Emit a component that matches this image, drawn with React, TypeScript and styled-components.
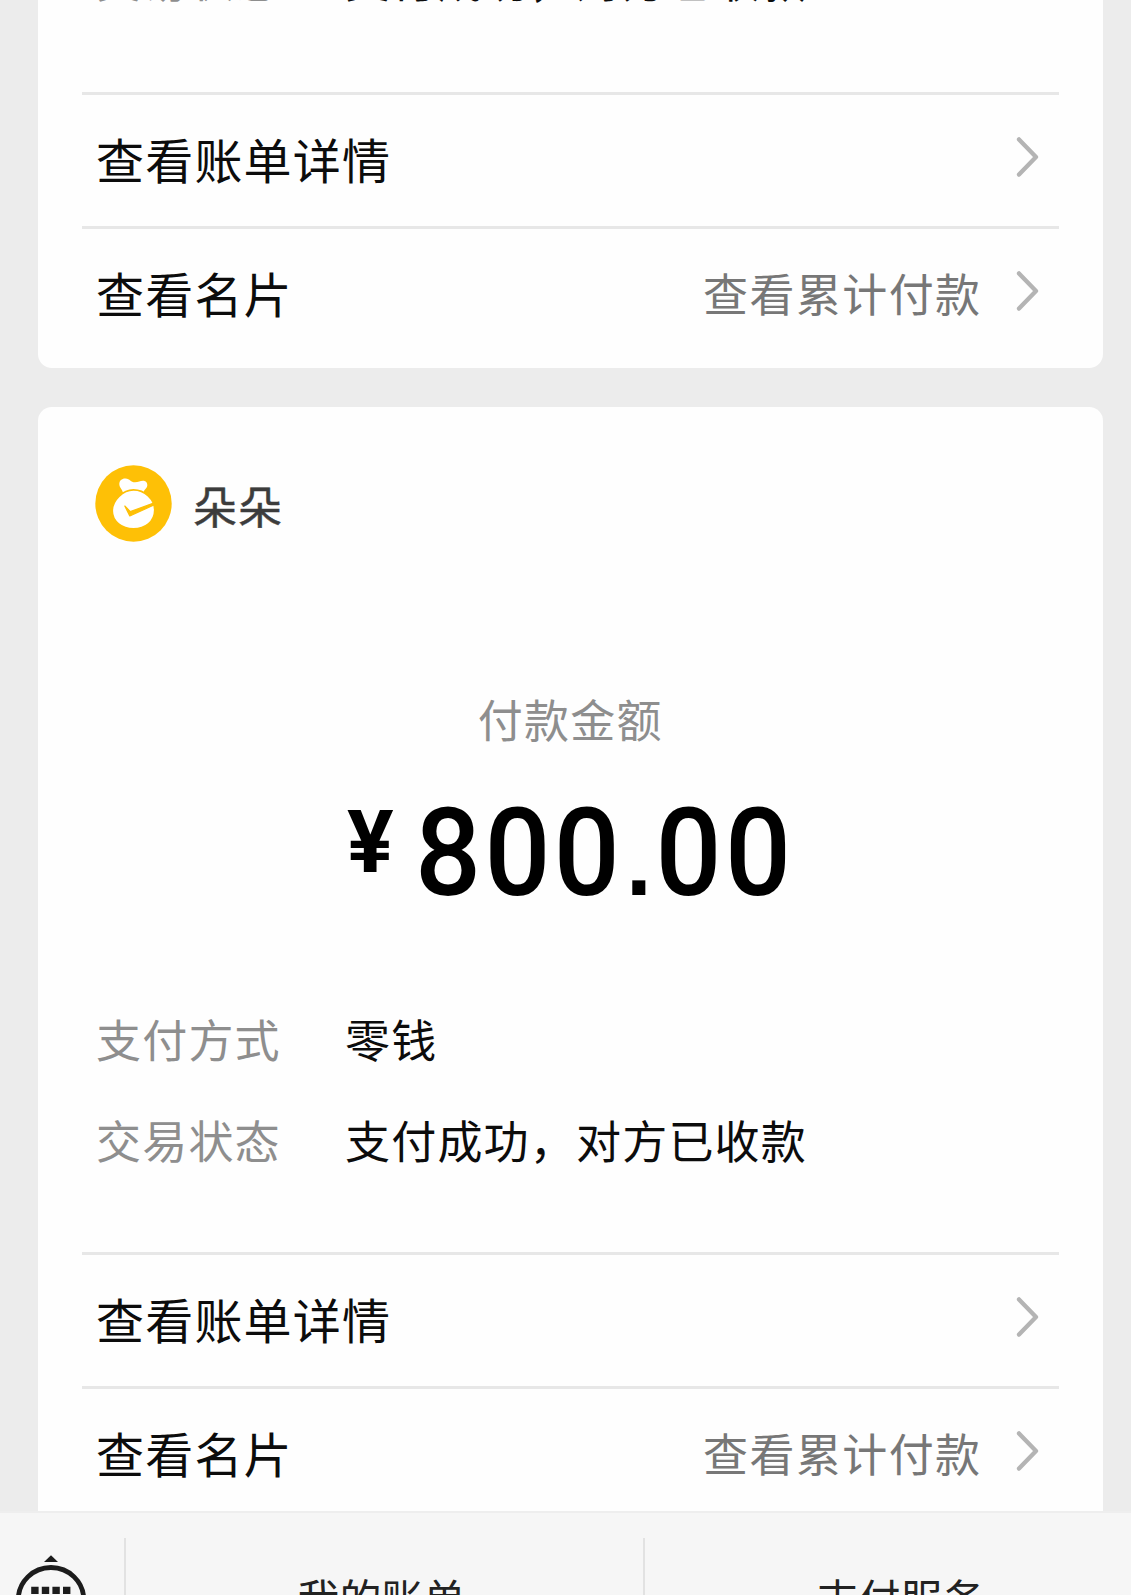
import styled, {createGlobalStyle} from "styled-components";

const GlobalStyle = createGlobalStyle`
    * {
        box-sizing: border-box;
    }

    body {
        margin: 0;
        background: #ececec;
        overflow: hidden;
        font-family: "Noto Sans CJK SC", sans-serif;
    }
`

type DetailItem = {
    label: string,
    value: string,
}

type PayInfo = {
    name: string,
    yuan: string,
    cents: string,
}

type PayCardProps = {
    info?: PayInfo,
    details: DetailItem[],
}

const STATUS: DetailItem = {label: "交易状态", value: "支付成功，对方已收款"}
const METHOD: DetailItem = {label: "支付方式", value: "零钱"}

const App = () => {
    return <StyledPage>
        <GlobalStyle/>
        <StyledFeed>
            <StyledFeedList>
                <PayCard details={[STATUS]}/>
                <PayCard info={{name: "朵朵", yuan: "800", cents: "00"}} details={[METHOD, STATUS]}/>
            </StyledFeedList>
        </StyledFeed>
        <StyledMenuBar>
            <StyledKeyboardButton>
                <KeyboardIcon/>
            </StyledKeyboardButton>
            <StyledMenuButton>我的账单</StyledMenuButton>
            <StyledMenuButton>支付服务</StyledMenuButton>
        </StyledMenuBar>
    </StyledPage>
}

const PayCard = ({info, details}: PayCardProps) => {
    return <StyledCard $cut={!info}>
        {info && <>
            <StyledHeader>
                <BagLogo/>
                <StyledName>{info.name}</StyledName>
            </StyledHeader>
            <StyledAmountLabel>付款金额</StyledAmountLabel>
            <StyledAmount>
                <StyledCurrency>¥</StyledCurrency>
                <StyledNumber>{info.yuan}<StyledPoint>.</StyledPoint>{info.cents}</StyledNumber>
            </StyledAmount>
        </>}
        <StyledDetails>
            {details.map(item =>
                <StyledDetailRow key={item.label}>
                    <StyledDetailLabel>{item.label}</StyledDetailLabel>
                    <StyledDetailValue>{item.value}</StyledDetailValue>
                </StyledDetailRow>
            )}
        </StyledDetails>
        <StyledLinkRow>
            <StyledLinkTitle>查看账单详情</StyledLinkTitle>
            <Chevron/>
        </StyledLinkRow>
        <StyledLinkRow>
            <StyledLinkTitle>查看名片</StyledLinkTitle>
            <StyledLinkExtra>查看累计付款</StyledLinkExtra>
            <Chevron/>
        </StyledLinkRow>
    </StyledCard>
}

const Chevron = () => (
    <StyledChevron viewBox="0 0 24 42">
        <path d="M3 3.4 L20 21 L3 38.6" fill="none" stroke="#b4b4b4" strokeWidth="4.3" strokeLinecap="round"
              strokeLinejoin="round"/>
    </StyledChevron>
)

const BagLogo = () => (
    <StyledLogo viewBox="0 0 77 77">
        <circle cx="38.5" cy="38.5" r="38.2" fill="#fec006"/>
        <path d="M28 28 C27.5 24 24.3 23 24.3 19 C24.3 15.5 27 13.2 30.5 13.4 C35 13.6 35.5 17.2 40 17.2 C43.5 17.2 45 15.8 48 15.8 C51 15.8 52.5 18 52.3 20.5 C52 23.5 49 24 48.5 28 Z"
              fill="#fff"/>
        <path d="M38.5 24.8 C49.5 24.8 59.8 34 59.8 45 C59.8 57 50 63.8 38.5 63.8 C27 63.8 17.2 56.5 17.2 46 C17.2 35 28 24.8 38.5 24.8 Z"
              fill="#fff" stroke="#fec006" strokeWidth="1.8"/>
        <path d="M29.8 41 L35.3 46.6 L60 37.6 L60 39.5 L34.8 51 Z" fill="#fec006"
              stroke="#fec006" strokeWidth="1.2" strokeLinejoin="round"/>
    </StyledLogo>
)

const KeyboardIcon = () => (
    <StyledKeyboard viewBox="0 0 74 84">
        <path d="M37 3.3 L44 10 H30 Z" fill="#1c1c1c"/>
        <ellipse cx="37" cy="47.5" rx="32.7" ry="32" fill="none" stroke="#1c1c1c" strokeWidth="4.8"/>
        <path d="M17.2 34.7h7.4v7.4h-7.4z M27.8 34.7h7.4v7.4h-7.4z M38.4 34.7h7.4v7.4h-7.4z M49 34.7h7.4v7.4h-7.4z"
              fill="#1c1c1c"/>
        <path d="M22.5 46h7.4v7.4h-7.4z M33 46h7.4v7.4h-7.4z M43.6 46h7.4v7.4h-7.4z M25 58h24v4h-24z" fill="#1c1c1c"/>
    </StyledKeyboard>
)

const StyledPage = styled.div`
    display: flex;
    flex-direction: column;
    width: 1131px;
    height: 1595px;
    overflow: hidden;
    background: #ececec;
`

const StyledFeed = styled.div`
    height: 1511px;
    flex-shrink: 0;
    overflow: hidden;
`

/* the list is scrolled, only the end of the first card is visible */
const StyledFeedList = styled.div`
    display: flex;
    flex-direction: column;
    gap: 39px;
    margin-top: -70px;
    padding: 0 28.5px 0 38px;
`

const StyledCard = styled.div<{ $cut: boolean }>`
    display: flex;
    flex-direction: column;
    padding: ${props => props.$cut ? "0" : "58px"} 44px 8px;
    border-radius: 14px;
    background: #fefefe;
`

const StyledHeader = styled.div`
    display: flex;
    align-items: center;
    height: 77px;
    padding-left: 13px;
    gap: 21px;
`

const StyledLogo = styled.svg`
    width: 77px;
    height: 77px;
`

const StyledName = styled.span`
    padding-top: 2px;
    font-size: 44px;
    line-height: 60px;
    letter-spacing: 1px;
    color: #3c3c3c;
    -webkit-text-stroke: 0.5px #3c3c3c;
`

const StyledAmountLabel = styled.div`
    height: 60px;
    margin-top: 147px;
    text-align: center;
    font-size: 45px;
    line-height: 60px;
    letter-spacing: 1.2px;
    color: #8e8e8e;
`

const StyledAmount = styled.div`
    display: flex;
    height: 120px;
    margin-top: 44px;
    padding-left: 265px;
    color: #000;
`

const StyledCurrency = styled.span`
    width: 68px;
    font-family: Roboto, sans-serif;
    font-size: 87px;
    font-weight: 700;
    line-height: 98px;
`

const StyledNumber = styled.span`
    font-family: Roboto, sans-serif;
    font-size: 123px;
    font-weight: 500;
    line-height: 121px;
    letter-spacing: 3.6px;
    transform: scaleX(0.944);
    transform-origin: left;
`

/* square decimal point */
const StyledPoint = styled.span`
    margin-left: 3px;
    font-family: "Liberation Sans", sans-serif;
    font-size: 98px;
    font-weight: 700;
    letter-spacing: 4px;
`

const StyledDetails = styled.div`
    margin: 76px 14px 62px;

    &:first-child {
        margin-top: -1.5px;
        margin-bottom: 63px;
    }
`

const StyledDetailRow = styled.div`
    display: flex;
    align-items: center;
    height: 100.5px;
    font-size: 45px;
    line-height: 60px;
    letter-spacing: 1.2px;
`

const StyledDetailLabel = styled.span`
    width: 249px;
    color: #8e8e8e;
`

const StyledDetailValue = styled.span`
    color: #0c0c0c;
`

const StyledLinkRow = styled.div`
    display: flex;
    align-items: center;
    height: 134px;
    padding: 0 19px 0 14px;
    border-top: 3px solid #e7e7e7;
`

const StyledLinkTitle = styled.span`
    flex: 1;
    padding-bottom: 6px;
    font-size: 48px;
    line-height: 60px;
    letter-spacing: 1.2px;
    color: #0c0c0c;
`

const StyledLinkExtra = styled.span`
    margin-right: 34px;
    padding-bottom: 4px;
    font-size: 45px;
    line-height: 60px;
    letter-spacing: 1.4px;
    color: #777;
`

const StyledChevron = styled.svg`
    width: 24px;
    height: 42px;
    margin-bottom: 7px;
`

const StyledMenuBar = styled.div`
    display: flex;
    height: 160px;
    flex-shrink: 0;
    padding-top: 25px;
    border-top: 2px solid #eeeeee;
    background: #f6f6f6;
`

const StyledKeyboardButton = styled.div`
    flex-shrink: 0;
    width: 124px;
    padding: 14px 0 0 14px;
`

const StyledKeyboard = styled.svg`
    display: block;
    width: 74px;
    height: 84px;
`

const StyledMenuButton = styled.div`
    flex-shrink: 0;
    width: 519px;
    padding: 29px 6px 0 0;
    border-left: 2px solid #e2e2e2;
    text-align: center;
    font-size: 42px;
    line-height: 60px;
    color: #222;
`

export default App
